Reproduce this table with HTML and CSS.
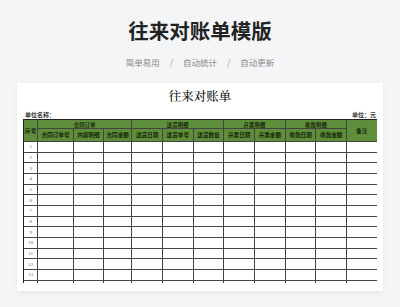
FILE: index.html
```html
<!DOCTYPE html>
<html lang="zh">
<head>
<meta charset="utf-8">
<link rel="stylesheet" href="styles.css">
</head>
<body>
<header class="hero">
  <h1 class="hero-title">往来对账单模版</h1>
  <div class="hero-tags">
    <span>简单易用</span><span class="sep">/</span><span>自动统计</span><span class="sep">/</span><span>自动更新</span>
  </div>
</header>
<section class="card">
  <div class="sheet-title">往来对账单</div>
  <div class="unit-row"><span>单位名称：</span><span>单位：元</span></div>
  <div class="clip">
    <div class="grid">
      <div class="h h1 seq">序号</div>
      <div class="h h1 g3">合同订单</div>
      <div class="h h1 g3">送货明细</div>
      <div class="h h1 g2">开票明细</div>
      <div class="h h1 g2">收款明细</div>
      <div class="h h1 note">备注</div>
      <div class="h h2">合同订单号</div>
      <div class="h h2">内容明细</div>
      <div class="h h2">合同金额</div>
      <div class="h h2">送货日期</div>
      <div class="h h2">送货单号</div>
      <div class="h h2">送货数量</div>
      <div class="h h2">开票日期</div>
      <div class="h h2">开票金额</div>
      <div class="h h2">收款日期</div>
      <div class="h h2">收款金额</div>
      <div class="n">1</div><div></div><div></div><div></div><div></div><div></div><div></div><div></div><div></div><div></div><div></div><div></div>
      <div class="n">2</div><div></div><div></div><div></div><div></div><div></div><div></div><div></div><div></div><div></div><div></div><div></div>
      <div class="n">3</div><div></div><div></div><div></div><div></div><div></div><div></div><div></div><div></div><div></div><div></div><div></div>
      <div class="n">4</div><div></div><div></div><div></div><div></div><div></div><div></div><div></div><div></div><div></div><div></div><div></div>
      <div class="n">5</div><div></div><div></div><div></div><div></div><div></div><div></div><div></div><div></div><div></div><div></div><div></div>
      <div class="n">6</div><div></div><div></div><div></div><div></div><div></div><div></div><div></div><div></div><div></div><div></div><div></div>
      <div class="n">7</div><div></div><div></div><div></div><div></div><div></div><div></div><div></div><div></div><div></div><div></div><div></div>
      <div class="n">8</div><div></div><div></div><div></div><div></div><div></div><div></div><div></div><div></div><div></div><div></div><div></div>
      <div class="n">9</div><div></div><div></div><div></div><div></div><div></div><div></div><div></div><div></div><div></div><div></div><div></div>
      <div class="n">10</div><div></div><div></div><div></div><div></div><div></div><div></div><div></div><div></div><div></div><div></div><div></div>
      <div class="n">11</div><div></div><div></div><div></div><div></div><div></div><div></div><div></div><div></div><div></div><div></div><div></div>
      <div class="n">12</div><div></div><div></div><div></div><div></div><div></div><div></div><div></div><div></div><div></div><div></div><div></div>
      <div class="n">13</div><div></div><div></div><div></div><div></div><div></div><div></div><div></div><div></div><div></div><div></div><div></div>
      <div class="n"></div><div></div><div></div><div></div><div></div><div></div><div></div><div></div><div></div><div></div><div></div><div></div>
    </div>
  </div>
</section>
</body>
</html>
```
FILE: styles.css
```css
* { box-sizing: border-box; margin: 0; padding: 0; }
html, body { width: 400px; height: 307px; overflow: hidden; }
body {
  background: #f4f5f7;
  font-family: "Noto Sans CJK SC", "Noto Sans", sans-serif;
}
.hero { text-align: center; }
.hero-title {
  margin-top: 16px;
  font-size: 20.5px;
  line-height: 28px;
  font-weight: 700;
  color: #222;
}
.hero-tags {
  margin-top: 12px;
  display: flex;
  justify-content: center;
  font-size: 8.5px;
  line-height: 12px;
  color: #8a8a8a;
}
.sep { margin: 0 10px; color: #a0a0a0; }
.card {
  margin: 15px 0 0 17px;
  width: 366px;
  background: #fff;
  box-shadow: 0 2px 6px rgba(0, 0, 0, 0.06);
  padding: 5px 6px 8px 6px;
}
.sheet-title {
  text-align: center;
  font-family: "Noto Serif CJK SC", "Noto Sans CJK SC", serif;
  font-size: 12.5px;
  line-height: 16px;
  font-weight: 500;
  color: #111;
}
.unit-row {
  margin-top: 7px;
  display: flex;
  justify-content: space-between;
  padding: 0 1px 0 2px;
  font-size: 6px;
  line-height: 8px;
  font-weight: 700;
  color: #333;
}
.clip { height: 164px; overflow: hidden; }
.grid {
  display: grid;
  grid-template-columns: 14.3px 35.4px 30.3px 28.3px repeat(8, 30.7px);
  grid-template-rows: 9px 13px repeat(14, 10.67px);
  border-top: 1px solid #222;
  border-left: 1px solid #222;
  width: 354px;
}
.grid > div {
  border-right: 1px solid #444;
  border-bottom: 1px solid #444;
  display: flex;
  align-items: center;
  justify-content: center;
  min-width: 0;
}
.h {
  background: #5e8e39;
  color: #16240c;
  font-weight: 700;
  font-size: 5.6px;
  white-space: nowrap;
  overflow: hidden;
}
.h1 { font-size: 5.2px; letter-spacing: 0.3px; }
.seq { grid-row: span 2; font-size: 5.6px; }
.note { grid-row: span 2; grid-column: 12; font-size: 5.2px; letter-spacing: 0.6px; }
.g3 { grid-column: span 3; }
.g2 { grid-column: span 2; }
.n { font-size: 5px; color: #666; font-family: "Liberation Serif", serif; }
```
